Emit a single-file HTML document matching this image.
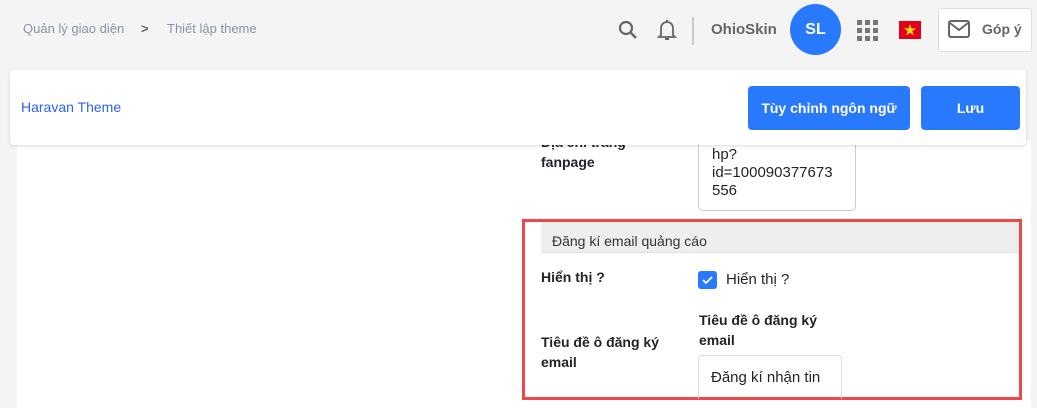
<!DOCTYPE html>
<html><head><meta charset="utf-8"><style>
*{box-sizing:border-box;margin:0;padding:0}
body{width:1037px;height:408px;overflow:hidden;background:#f4f4f4;font-family:"Liberation Sans",Arial,sans-serif;position:relative}
.abs{position:absolute}
.bc{top:21px;font-size:13px;color:#8a93a6}
.content{left:17px;top:140px;width:1014px;height:268px;background:#fff}
.card{left:10px;top:70px;width:1016px;height:75px;background:#fff;border-radius:3px;box-shadow:0 1px 3px rgba(0,0,0,.15)}
.btn{background:#2979ff;color:#fff;font-weight:bold;font-size:14px;border-radius:4px;display:flex;align-items:center;justify-content:center}
.lbl{font-size:14px;color:#212529;font-weight:bold;line-height:20px}
.txt{font-size:14px;color:#212529;line-height:18px}
</style></head><body>
<div class="abs bc" style="left:23px">Quản lý giao diện</div>
<div class="abs bc" style="left:141px;color:#666;font-weight:bold">&gt;</div>
<div class="abs bc" style="left:167px">Thiết lập theme</div>
<svg class="abs" style="left:617px;top:19px" width="22" height="22" viewBox="0 0 22 22"><circle cx="9" cy="9" r="6" fill="none" stroke="#666" stroke-width="2.2"/><path d="M13.5 13.5L19 19" stroke="#666" stroke-width="2.4"/></svg>
<svg class="abs" style="left:657px;top:18px" width="20" height="24" viewBox="0 0 20 24"><path d="M4 17V10a6 6 0 0 1 12 0v7l2 2H2z" fill="none" stroke="#666" stroke-width="1.8"/><path d="M8 21h4" stroke="#666" stroke-width="2"/><path d="M10 2v2" stroke="#666" stroke-width="2"/></svg>
<div class="abs" style="left:692px;top:17px;width:2px;height:28px;background:#ccc"></div>
<div class="abs" style="left:711px;top:21px;font-size:15px;font-weight:bold;color:#666">OhioSkin</div>
<div class="abs" style="left:790px;top:4px;width:51px;height:51px;border-radius:50%;background:#2979ff;color:#fff;font-weight:bold;font-size:16px;display:flex;align-items:center;justify-content:center">SL</div>
<svg class="abs" style="left:857px;top:20px" width="22" height="21">
<g fill="#777"><rect x="0" y="0" width="5" height="5"/><rect x="8" y="0" width="5" height="5"/><rect x="16" y="0" width="5" height="5"/><rect x="0" y="8" width="5" height="5"/><rect x="8" y="8" width="5" height="5"/><rect x="16" y="8" width="5" height="5"/><rect x="0" y="16" width="5" height="5"/><rect x="8" y="16" width="5" height="5"/><rect x="16" y="16" width="5" height="5"/></g></svg>
<svg class="abs" style="left:899px;top:21px" width="22" height="18"><rect width="22" height="18" fill="#e3001b"/><polygon points="11,3 12.4,7.4 17,7.4 13.3,10.1 14.7,14.5 11,11.8 7.3,14.5 8.7,10.1 5,7.4 9.6,7.4" fill="#ffdd00"/></svg>
<div class="abs" style="left:938px;top:8px;width:94px;height:44px;background:#fff;border:1px solid #ddd;border-radius:3px"></div>
<svg class="abs" style="left:948px;top:20px" width="22" height="18"><rect x="1" y="1" width="20" height="16" rx="2" fill="none" stroke="#666" stroke-width="2"/><path d="M2 3l9 7 9-7" fill="none" stroke="#666" stroke-width="2"/></svg>
<div class="abs" style="left:982px;top:21px;font-size:14px;font-weight:bold;color:#666">Góp ý</div>
<div class="abs content"></div>
<div class="abs lbl" style="left:541px;top:132px">Địa chỉ trang</div>
<div class="abs lbl" style="left:541px;top:152px">fanpage</div>
<div class="abs" style="left:698px;top:130px;width:158px;height:81px;border:1px solid #ccc;border-top:none;border-radius:0 0 5px 5px"></div>
<div class="abs txt" style="left:712px;top:146px;font-size:15px">hp?<br>id=100090377673<br>556</div>
<div class="abs card"></div>
<div class="abs" style="left:21px;top:99px;font-size:14px;color:#2962ff">Haravan Theme</div>
<div class="abs btn" style="left:748px;top:86px;width:162px;height:44px">Tùy chỉnh ngôn ngữ</div>
<div class="abs btn" style="left:921px;top:86px;width:99px;height:44px">Lưu</div>
<div class="abs" style="left:522px;top:219px;width:500px;height:181px;border:3px solid #f0474c"></div>
<div class="abs" style="left:541px;top:222px;width:478px;height:31px;background:#eee;border-bottom:1px solid #e2e2e2"></div>
<div class="abs txt" style="left:552px;top:232px;font-size:14px;color:#333">Đăng kí email quảng cáo</div>
<div class="abs lbl" style="left:541px;top:267px">Hiển thị ?</div>
<div class="abs" style="left:698px;top:271px;width:19px;height:18px;background:#2979ff;border-radius:3px"></div>
<svg class="abs" style="left:698px;top:271px" width="19" height="18"><path d="M5 9l3 3 6-6" fill="none" stroke="#fff" stroke-width="1.8"/></svg>
<div class="abs txt" style="left:726px;top:271px;font-size:15px">Hiển thị ?</div>
<div class="abs lbl" style="left:699px;top:310px">Tiêu đề ô đăng ký<br>email</div>
<div class="abs lbl" style="left:541px;top:332px">Tiêu đề ô đăng ký<br>email</div>
<div class="abs" style="left:698px;top:355px;width:144px;height:44px;border:1px solid #ddd;border-bottom:none;border-radius:4px 4px 0 0"></div>
<div class="abs txt" style="left:711px;top:369px;font-size:15px">Đăng kí nhận tin</div>
</body></html>
